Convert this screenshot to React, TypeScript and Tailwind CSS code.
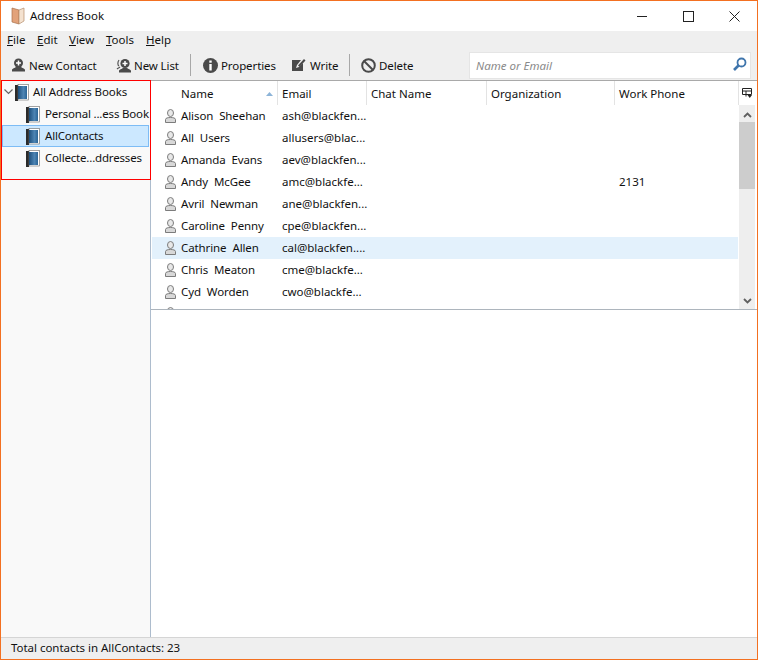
const contacts = [
  { name: "Alison Sheehan", email: "ash@blackfen..." },
  { name: "All Users", email: "allusers@blac..." },
  { name: "Amanda Evans", email: "aev@blackfen..." },
  { name: "Andy McGee", email: "amc@blackfe...", phone: "2131" },
  { name: "Avril Newman", email: "ane@blackfen..." },
  { name: "Caroline Penny", email: "cpe@blackfen..." },
  { name: "Cathrine Allen", email: "cal@blackfen....", selected: true },
  { name: "Chris Meaton", email: "cme@blackfe..." },
  { name: "Cyd Worden", email: "cwo@blackfe..." },
  { name: "", email: "" },
];

function PersonIcon() {
  return (
    <svg width="11" height="14" viewBox="0 0 11 14" className="shrink-0">
      <ellipse cx="5.5" cy="4" rx="3" ry="3.5" fill="#e8e8e8" stroke="#7c7c7c" />
      <path d="M0.5 13.5 V10.5 C0.5 9 3 8.5 5.5 8.5 C8 8.5 10.5 9 10.5 10.5 V13.5 Z" fill="#d8d8d8" stroke="#7c7c7c" />
    </svg>
  );
}

function BookIcon() {
  return (
    <svg width="14" height="17" viewBox="0 0 14 17" className="shrink-0">
      <defs>
        <linearGradient id="bk" x1="0" y1="0" x2="1" y2="0">
          <stop offset="0" stopColor="#1d4f7c" />
          <stop offset="0.6" stopColor="#4d84b3" />
          <stop offset="1" stopColor="#2b6596" />
        </linearGradient>
      </defs>
      <rect x="0" y="1" width="3" height="16" fill="#2b2b2b" />
      <rect x="3" y="0.5" width="10.5" height="15.5" fill="#fff" stroke="#666" strokeWidth="0.6" />
      <rect x="3" y="2" width="9" height="13" fill="url(#bk)" />
    </svg>
  );
}

function AppIcon() {
  return (
    <svg width="14" height="18" viewBox="0 0 14 18" className="shrink-0">
      <path d="M1 1 L8 3 V17 L1 15 Z" fill="#e2a27a" stroke="#a9714c" strokeWidth="0.7" />
      <path d="M8 3 L13 1 V14 L8 17 Z" fill="#f4e2d0" stroke="#b58d6c" strokeWidth="0.7" />
    </svg>
  );
}

function NewContactIcon() {
  return (
    <svg width="15" height="14" viewBox="0 0 15 14" className="shrink-0">
      <circle cx="7.5" cy="5" r="4.5" fill="#4a4a4a" />
      <path d="M7.5 2.5 V7.5 M5 5 H10" stroke="#fff" strokeWidth="1.5" />
      <path d="M1 13.5 V12 C1 10.5 4 10 5 9 H10 C11 10 14 10.5 14 12 V13.5 Z" fill="#4a4a4a" />
    </svg>
  );
}

function NewListIcon() {
  return (
    <svg width="16" height="15" viewBox="0 0 16 15" className="shrink-0">
      <path d="M3 2 C1.5 4 1.5 7 3 8 M1 11 C2 10 3 10 4 9" fill="none" stroke="#555" strokeWidth="1.2" />
      <circle cx="9" cy="5.5" r="4.6" fill="#4a4a4a" />
      <path d="M9 3 V8 M6.5 5.5 H11.5" stroke="#fff" strokeWidth="1.5" />
      <path d="M3 14.5 V13 C3 11.5 6 11 7 10 H11 C12 11 15 11.5 15 13 V14.5 Z" fill="#4a4a4a" />
    </svg>
  );
}

function InfoIcon() {
  return (
    <svg width="15" height="15" viewBox="0 0 15 15" className="shrink-0">
      <circle cx="7.5" cy="7.5" r="7.5" fill="#4a4a4a" />
      <rect x="6.3" y="2.5" width="2.4" height="2.2" fill="#fff" />
      <rect x="6.3" y="6" width="2.4" height="6.5" fill="#fff" />
    </svg>
  );
}

function WriteIcon() {
  return (
    <svg width="14" height="14" viewBox="0 0 14 14" className="shrink-0">
      <path d="M0 2 H9 L5 7 L4 10 L7 9 L11 5 V13 H0 Z" fill="#4a4a4a" />
      <path d="M6 7.5 L12 1 L13.5 2.5 L7.5 9 Z" fill="#4a4a4a" />
    </svg>
  );
}

function DeleteIcon() {
  return (
    <svg width="15" height="15" viewBox="0 0 15 15" className="shrink-0">
      <circle cx="7.5" cy="7.5" r="6.3" fill="none" stroke="#4a4a4a" strokeWidth="2" />
      <path d="M3 3 L12 12" stroke="#4a4a4a" strokeWidth="2" />
    </svg>
  );
}

function SearchIcon() {
  return (
    <svg width="14" height="14" viewBox="0 0 14 14" className="shrink-0 ml-auto mb-[2px]">
      <circle cx="8.5" cy="5.5" r="4" fill="none" stroke="#3f75ac" strokeWidth="1.8" />
      <path d="M5.5 8.5 L1 13" stroke="#3f75ac" strokeWidth="2.6" />
    </svg>
  );
}

function ToolButton({ icon, label, className }: { icon: React.ReactNode; label: string; className: string }) {
  return (
    <div className={`flex items-center ${className}`}>
      {icon}
      <span className="pt-[2px] tracking-[-0.1px]">{label}</span>
    </div>
  );
}

function TreeRow({ label, selected }: { label: string; selected?: boolean }) {
  return (
    <div className={`h-[22px] flex items-center pl-[23px] ml-[1px] mr-[1px] gap-[5px] border ${selected ? "bg-[#cce8ff] border-[#7dbcf5]" : "border-transparent"}`}>
      <BookIcon />
      <span className="whitespace-nowrap tracking-[-0.18px]">{label}</span>
    </div>
  );
}

function HeaderCell({ label, className }: { label: string; className: string }) {
  return (
    <div className={`h-full flex items-center pl-[4px] pt-[2px] border-l border-[#e3e3e3] ${className}`}>{label}</div>
  );
}

export default function App() {
  return (
    <div className="relative w-[758px] h-[660px] flex flex-col border border-[#f37021] bg-white text-[11.5px] text-[#111] overflow-hidden font-['Noto_Sans',sans-serif]">
      {/* Title bar */}
      <div className="h-[30px] flex items-center shrink-0">
        <div className="ml-[10px] mr-[5px]"><AppIcon /></div>
        <span>Address Book</span>
        <div className="ml-auto flex items-center">
          <svg width="11" height="11" viewBox="0 0 11 11" className="mr-[35px]"><path d="M0 5.5 H10" stroke="#222" /></svg>
          <svg width="11" height="11" viewBox="0 0 11 11" className="mr-[35px]"><rect x="0.5" y="0.5" width="10" height="10" fill="none" stroke="#222" /></svg>
          <svg width="11" height="11" viewBox="0 0 11 11" className="mr-[17px]"><path d="M0.5 0.5 L10.5 10.5 M10.5 0.5 L0.5 10.5" stroke="#222" /></svg>
        </div>
      </div>

      {/* Menu bar */}
      <div className="h-[19px] shrink-0 bg-[#efefef] flex items-center pl-[6px] pb-[2px]">
        <span className="w-[30px]"><u>F</u>ile</span>
        <span className="w-[32px]"><u>E</u>dit</span>
        <span className="w-[37px]"><u>V</u>iew</span>
        <span className="w-[40px]"><u>T</u>ools</span>
        <span><u>H</u>elp</span>
      </div>

      {/* Toolbar */}
      <div className="h-[30px] shrink-0 bg-[#efefef] flex items-center pl-[10px]">
        <ToolButton icon={<NewContactIcon />} label="New Contact" className="w-[105px] gap-[3px]" />
        <ToolButton icon={<NewListIcon />} label="New List" className="w-[74px] gap-[2px]" />
        <div className="w-px h-[22px] bg-[#a8a8a8]" />
        <ToolButton icon={<InfoIcon />} label="Properties" className="w-[89px] ml-[12px] gap-[3px]" />
        <ToolButton icon={<WriteIcon />} label="Write" className="w-[57px] gap-[4px]" />
        <div className="w-px h-[22px] bg-[#a8a8a8]" />
        <ToolButton icon={<DeleteIcon />} label="Delete" className="w-[108px] ml-[11px] gap-[3px]" />
        <div className="w-[282px] h-[27px] bg-white border border-[#e5e5e5] flex items-center pl-[6px] pr-[3px]">
          <span className="italic text-[#8a8a8a] pt-[2px]">Name or Email</span>
          <SearchIcon />
        </div>
      </div>

      {/* Main area */}
      <div className="flex-1 min-h-0 flex border-t border-[#a9a9a9]">
        {/* Address book tree */}
        <div className="w-[150px] shrink-0 bg-[#f9f9f9] border-r border-[#adbccd]">
          <div className="h-[22px] flex items-center pl-[3px] gap-[2px]">
            <svg width="9" height="6" viewBox="0 0 9 6" className="shrink-0"><path d="M0.5 0.5 L4.5 4.5 L8.5 0.5" fill="none" stroke="#666" strokeWidth="1.2" /></svg>
            <BookIcon />
            <span className="ml-[2px] whitespace-nowrap tracking-[-0.1px]">All Address Books</span>
          </div>
          <TreeRow label="Personal ...ess Book" />
          <TreeRow label="AllContacts" selected />
          <TreeRow label="Collecte...ddresses" />
        </div>

        <div className="flex-1 min-w-0 flex flex-col">
          {/* Contact list */}
          <div className="h-[229px] shrink-0 flex flex-col border-b border-[#adb5bd]">
            <div className="h-[24px] shrink-0 flex items-center">
              <div className="w-[126px] h-full flex items-center pl-[30px] pr-[4px] pt-[2px]">
                <span>Name</span>
                <svg width="7" height="4" viewBox="0 0 7 4" className="ml-auto"><path d="M0 4 L3.5 0 L7 4 Z" fill="#8db4d8" /></svg>
              </div>
              <HeaderCell label="Email" className="w-[89px]" />
              <HeaderCell label="Chat Name" className="w-[120px]" />
              <HeaderCell label="Organization" className="w-[128px]" />
              <HeaderCell label="Work Phone" className="w-[124px]" />
              <div className="h-full flex-1 flex items-center justify-center border-l border-[#e3e3e3] pr-[2px] pb-[1px]">
                <svg width="10" height="10" viewBox="0 0 10 10">
                  <path d="M0.5 0.5 H9.5 V6.5 H0.5 Z M0.5 3 H9.5 M4 3 V8.5" fill="none" stroke="#222" />
                  <path d="M5.5 7 H10 L7.75 10 Z" fill="#222" />
                </svg>
              </div>
            </div>
            <div className="flex-1 min-h-0 flex">
              <div className="w-[587px] pl-[1px] overflow-hidden">
                {contacts.map((c) => (
                  <div key={c.name} className={`h-[22px] flex items-center ${c.selected ? "bg-[#e3f1fc]" : ""}`}>
                    <div className="w-[125px] pl-[13px] flex items-center gap-[5px] shrink-0">
                      <PersonIcon />
                      <span className="[word-spacing:3px] whitespace-nowrap tracking-[-0.1px]">{c.name}</span>
                    </div>
                    <div className="w-[337px] shrink-0 pl-[5px]">{c.email}</div>
                    <div className="pl-[5px]">{c.phone}</div>
                  </div>
                ))}
              </div>
              <div className="w-[16px] ml-[1px] bg-[#eeeeee] flex flex-col items-center">
                <svg width="9" height="6" viewBox="0 0 9 6" className="mt-[7px] mb-[4px] shrink-0"><path d="M1 5 L4.5 1.5 L8 5" fill="none" stroke="#606060" strokeWidth="1.8" /></svg>
                <div className="w-full h-[67px] bg-[#cdcdcd]" />
                <svg width="9" height="6" viewBox="0 0 9 6" className="mt-auto mb-[5px] shrink-0"><path d="M1 1 L4.5 4.5 L8 1" fill="none" stroke="#606060" strokeWidth="1.8" /></svg>
              </div>
            </div>
          </div>
          {/* Card preview pane */}
          <div className="flex-1 bg-white" />
        </div>
      </div>

      {/* Status bar */}
      <div className="h-[22px] shrink-0 bg-[#efefef] border-t border-[#d5d5d5] flex items-center pl-[10px] pb-[2px] tracking-[-0.03px]">
        Total contacts in AllContacts: 23
      </div>

      {/* Red annotation box */}
      <div className="absolute left-0 top-[79px] w-[150px] h-[100px] border border-[#ff0000] pointer-events-none" />
    </div>
  );
}
